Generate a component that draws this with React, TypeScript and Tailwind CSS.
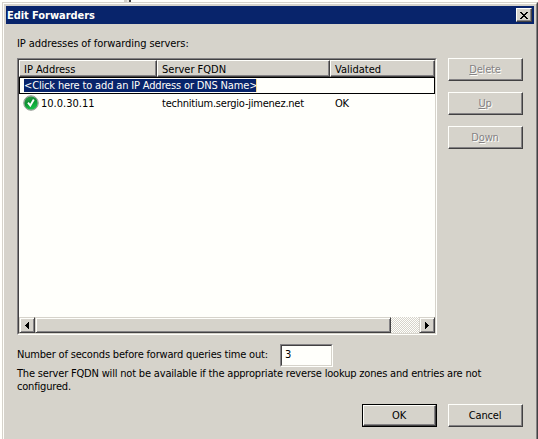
import { ReactNode } from "react";
import clsx from "clsx";

interface DialogButtonProps {
    children: ReactNode;
    disabled?: boolean;
    primary?: boolean;
}

const raised =
    "border border-t-[#fffffb] border-l-[#fffffb] border-r-[#424142] border-b-[#424142] bg-[#d6d3cb] shadow-[inset_-1px_-1px_0_#848284]";

const DialogButton = ({ children, disabled, primary }: DialogButtonProps) => {
    return (
        <div className={clsx("h-[23px] w-[75px]", primary && "border border-black")}>
            <button
                type="button"
                disabled={disabled}
                className={clsx(
                    "flex h-full w-full items-center justify-center pr-px pb-px",
                    raised,
                    disabled && "text-[#848284] [text-shadow:1px_1px_0_#fffffb]"
                )}
            >
                <span>{children}</span>
            </button>
        </div>
    );
};

const ScrollArrow = ({ left }: { left?: boolean }) => {
    return (
        <div className="flex h-4 w-4 items-center justify-center border border-t-[#d6d3cb] border-l-[#d6d3cb] border-r-[#424142] border-b-[#424142] bg-[#d6d3cb] pr-px shadow-[inset_1px_1px_0_#fffffb,inset_-1px_-1px_0_#848284]">
            <svg width="4" height="7" shapeRendering="crispEdges">
                <path d={left ? "M4 0v7h-1v-1h-1v-1h-1v-1h-1v-1h1v-1h1v-1h1v-1z" : "M0 0v7h1v-1h1v-1h1v-1h1v-1h-1v-1h-1v-1h-1v-1z"} />
            </svg>
        </div>
    );
};

const CheckIcon = () => {
    return (
        <svg width="16" height="16" viewBox="0 0 16 16">
            <defs>
                <linearGradient id="check-fill" x1="0" y1="0" x2="0.4" y2="1">
                    <stop offset="0" stopColor="#3f9c55" />
                    <stop offset="0.5" stopColor="#0c9030" />
                    <stop offset="1" stopColor="#18c048" />
                </linearGradient>
            </defs>
            <circle cx="8" cy="8" r="7.3" fill="#b4bcb4" stroke="#8d938d" strokeWidth="0.9" />
            <circle cx="8" cy="8" r="6.600" fill="url(#check-fill)" />
            <path d="M5 7.600l2.300 3L10.800 4.600" fill="none" stroke="#fff" strokeWidth="1.900" />
        </svg>
    );
};

const columns = [
    { name: "IP Address", width: "w-[138px]" },
    { name: "Server FQDN", width: "w-[173px]" },
    { name: "Validated", width: "w-[105px]" },
];

export default function App() {
    return (
        <div className="flex h-[439px] w-[538px] flex-col overflow-hidden bg-[#fffffb] font-['DejaVu_Sans_Condensed','DejaVu_Sans',sans-serif] text-[11px] leading-[13px] tracking-[-0.185px] text-black [font-stretch:condensed]">
            {/* Edge of the window behind */}
            <div className="flex h-0.5 shrink-0 pl-[124px]">
                <div className="w-[3px] bg-[#d6d3cb]" />
                <div className="w-0.5 bg-[#eceae5]" />
                <div className="w-0.5 bg-[#424142]" />
            </div>

            <div className="ml-0.5 flex-1 border border-b-0 border-t-[#d6d3cb] border-l-[#d6d3cb] border-r-[#424142] bg-[#d6d3cb]">
                <div className="h-full border border-b-0 border-t-[#fffffb] border-l-[#fffffb] border-r-[#848284] px-0.5 pt-0.5">
                    <div className="flex h-[18px] items-center justify-between bg-[#08246b] pr-0.5 pl-px">
                        <span className="font-bold tracking-[-0.06px] text-[#fffffb]">Edit Forwarders</span>
                        <button type="button" className={clsx("flex h-3.5 w-4 items-center justify-center", raised)}>
                            <svg width="8" height="7" shapeRendering="crispEdges">
                                <path d="M0 0h2v1h1v1h2v-1h1v-1h2v1h-1v1h-1v1h-1v1h1v1h1v1h1v1h-2v-1h-1v-1h-2v1h-1v1h-2v-1h1v-1h1v-1h1v-1h-1v-1h-1v-1h-1z" />
                            </svg>
                        </button>
                    </div>

                    <div className="pt-[13px] pr-[11px] pl-[11px]">
                        <p className="h-[21px] tracking-[-0.07px]">IP addresses of forwarding servers:</p>

                        <div className="flex gap-[11px]">
                            <div className="h-[277px] w-[420px] border border-t-[#848284] border-l-[#848284] border-r-[#fffffb] border-b-[#fffffb]">
                                <div className="flex h-full flex-col border border-t-[#424142] border-l-[#424142] border-r-[#d6d3cb] border-b-[#d6d3cb] bg-[#fffffb]">
                                    <div className="flex h-[17px] tracking-normal">
                                        {columns.map((column) => (
                                            <div key={column.name} className={clsx("h-full pt-0.5 pl-1", raised, column.width)}>
                                                {column.name}
                                            </div>
                                        ))}
                                    </div>
                                    <div className="flex h-[17px] border border-black pt-px pl-1">
                                        <span className="h-[13px] w-[233px] border-r border-[#f5db95] bg-[#08246b] tracking-[-0.16px] whitespace-nowrap text-[#fffffb]">
                                            &lt;Click here to add an IP Address or DNS Name&gt;
                                        </span>
                                    </div>
                                    <div className="flex h-[18px] items-center pl-1">
                                        <CheckIcon />
                                        <span className="w-[123px] pl-0.5 tracking-normal">10.0.30.11</span>
                                        <span className="w-[173px] tracking-[-0.23px]">technitium.sergio-jimenez.net</span>
                                        <span>OK</span>
                                    </div>
                                    <div className="mt-auto flex h-4">
                                        <ScrollArrow left />
                                        <div className="w-[356px] border border-t-[#d6d3cb] border-l-[#d6d3cb] border-r-[#424142] border-b-[#424142] bg-[#d6d3cb] shadow-[inset_1px_1px_0_#fffffb,inset_-1px_-1px_0_#848284]" />
                                        <div className="flex-1 bg-[repeating-conic-gradient(#d6d3cb_0_25%,#fffffb_0_50%)] bg-[length:2px_2px]" />
                                        <ScrollArrow />
                                    </div>
                                </div>
                            </div>

                            <div className="flex flex-col gap-[11px]">
                                <DialogButton disabled><u>D</u>elete</DialogButton>
                                <DialogButton disabled><u>U</u>p</DialogButton>
                                <DialogButton disabled>D<u>o</u>wn</DialogButton>
                            </div>
                        </div>

                        <div className="mt-[9px] flex h-[23px]">
                            <label htmlFor="timeout" className="w-[263px] pt-1 whitespace-nowrap">
                                Number of seconds before forward queries time out:
                            </label>
                            <div className="w-[53px] border border-t-[#848284] border-l-[#848284] border-r-[#fffffb] border-b-[#fffffb]">
                                <input
                                    id="timeout"
                                    defaultValue="3"
                                    className="block h-full w-full border border-t-[#424142] border-l-[#424142] border-r-[#d6d3cb] border-b-[#d6d3cb] bg-[#fffffb] pb-0.5 pl-[3px] outline-none"
                                />
                            </div>
                        </div>

                        <p className="whitespace-nowrap">
                            The server FQDN will not be available if the appropriate reverse lookup zones and entries are not
                            <br />
                            configured.
                        </p>

                        <div className="mt-[11px] flex justify-end gap-[11px]">
                            <DialogButton primary>OK</DialogButton>
                            <DialogButton>Cancel</DialogButton>
                        </div>
                    </div>
                </div>
            </div>
        </div>
    );
}
